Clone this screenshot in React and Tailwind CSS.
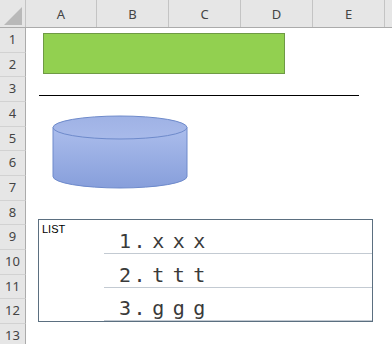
const columns = [
  { label: "A", width: "w-[71px]" },
  { label: "B", width: "w-[72px]" },
  { label: "C", width: "w-[72px]" },
  { label: "D", width: "w-[72px]" },
  { label: "E", width: "w-[72px]" },
  { label: "", width: "w-[72px]" },
];

const rows = [1, 2, 3, 4, 5, 6, 7, 8, 9, 10, 11, 12, 13];

const items = [
  { num: "1", letter: "x", height: "h-[34px]" },
  { num: "2", letter: "t", height: "h-[34px]" },
  { num: "3", letter: "g", height: "h-[33px]" },
];

const Cylinder = () => (
  <svg width="136" height="74" viewBox="0 0 136 74">
    <defs>
      <linearGradient id="body" x1="0" y1="0" x2="0" y2="1">
        <stop offset="0" stopColor="#abbdec" />
        <stop offset="1" stopColor="#879fdb" />
      </linearGradient>
      <linearGradient id="top" x1="0" y1="0" x2="0" y2="1">
        <stop offset="0" stopColor="#9fb2e5" />
        <stop offset="1" stopColor="#a8baea" />
      </linearGradient>
    </defs>
    <path
      d="M1 12.5 L1 61.5 A67 11.5 0 0 0 135 61.5 L135 12.5 Z"
      fill="url(#body)"
      stroke="#6e8acb"
      strokeWidth="1"
    />
    <ellipse
      cx="68"
      cy="12.5"
      rx="67"
      ry="11.5"
      fill="url(#top)"
      stroke="#6e8acb"
      strokeWidth="1"
    />
  </svg>
);

const App = () => {
  return (
    <div className="relative w-[392px] h-[344px] overflow-hidden bg-white font-['Noto_Sans',sans-serif]">
      {/* column header */}
      <div className="flex h-[28px] bg-[#e6e6e6] border-b border-[#ababab]">
        <div className="w-[26px] shrink-0 border-r border-[#c4c4c4] flex items-end justify-end pb-[2px] pr-[3px]">
          <svg width="18" height="18" viewBox="0 0 18 18">
            <polygon points="0,18 18,18 18,0" fill="#b9b9b9" />
          </svg>
        </div>
        {columns.map((col, i) => (
          <div
            key={i}
            className={`${col.width} shrink-0 border-r border-[#c4c4c4] flex items-center justify-center pt-[2px] text-[13px] text-[#444]`}
          >
            {col.label}
          </div>
        ))}
      </div>

      {/* rows */}
      <div className="flex flex-col">
        {rows.map((r) => (
          <div key={r} className="flex h-[24.67px] shrink-0">
            <div className="w-[26px] shrink-0 bg-[#e6e6e6] border-r border-b border-r-[#ababab] border-b-[#d2d2d2] flex items-center justify-center text-[13px] text-[#444]">
              {r}
            </div>
            <div className="flex-1 bg-white" />
          </div>
        ))}
      </div>

      {/* green rectangle */}
      <div className="absolute left-[43px] top-[33px] w-[242px] h-[41px] bg-[#92d050] border border-[#6f9a45]" />

      {/* line */}
      <div className="absolute left-[39px] top-[95px] w-[320px] h-px bg-black" />

      {/* cylinder */}
      <div className="absolute left-[52px] top-[115px]">
        <Cylinder />
      </div>

      {/* list box */}
      <div className="absolute left-[38px] top-[219px] w-[335px] h-[103px] border border-[#5b6f80] bg-white flex">
        <div className="w-[65px] shrink-0 pl-[3px] pt-[2px] text-[11px] leading-[14px] text-black font-['Liberation_Sans',sans-serif]">
          LIST
        </div>
        <div className="flex-1 flex flex-col">
          {items.map((it) => (
            <div
              key={it.num}
              className={`${it.height} shrink-0 border-b border-[#c3cad2] flex items-end pb-[2px] pl-[15px] text-[20px] leading-[20px] text-[#3a3a3a] font-['DejaVu_Sans_Mono',monospace]`}
            >
              <span className="w-[12px] text-center">{it.num}</span>
              <span className="w-[17px] text-center">.</span>
              <span className="w-[20.5px] text-center">{it.letter}</span>
              <span className="w-[20.5px] text-center">{it.letter}</span>
              <span className="w-[20.5px] text-center">{it.letter}</span>
            </div>
          ))}
        </div>
      </div>
    </div>
  );
};

export default App;
